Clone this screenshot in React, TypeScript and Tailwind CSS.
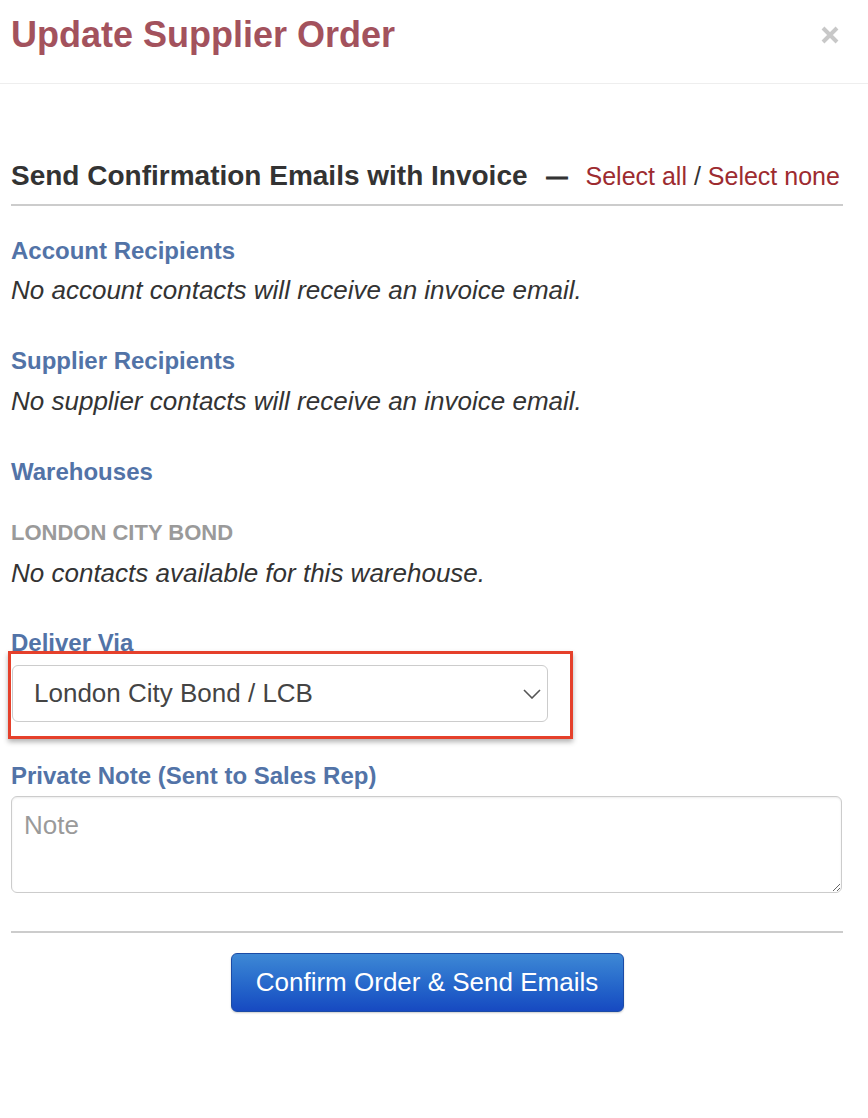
const Label = ({ children, className = "" }: { children: React.ReactNode; className?: string }) => (
  <div className={`text-[24px] leading-[30px] font-bold text-[#5273a7] ${className}`}>{children}</div>
);

const Note = ({ children, className = "" }: { children: React.ReactNode; className?: string }) => (
  <div className={`text-[26px] leading-[36px] italic text-[#333] ${className}`}>{children}</div>
);

export default function App() {
  return (
    <div className="w-[868px] min-h-[1118px] bg-white font-['Liberation_Sans',Arial,sans-serif]">
      {/* Modal header */}
      <div className="h-[84px] border-b border-[#eeeeee] px-[11px] pt-[15px] flex justify-between items-start">
        <h1 className="text-[36px] leading-[40px] font-bold text-[#a3525d]">Update Supplier Order</h1>
        <button className="mt-[10px] mr-[17px] w-[20px] h-[20px] flex items-center justify-center">
          <svg width="18" height="18" viewBox="0 0 18 18">
            <path d="M2 2 L16 16 M16 2 L2 16" stroke="#c8c8c8" strokeWidth="4" strokeLinecap="butt" />
          </svg>
        </button>
      </div>

      <div className="px-[11px]">
        {/* Section header */}
        <div className="mt-[74px] pb-[10px] border-b-2 border-[#cccccc] flex items-center w-[832px] whitespace-nowrap">
          <span className="text-[28px] leading-[36px] font-bold text-[#333]">Send Confirmation Emails with Invoice</span>
          <span className="text-[21px] leading-[36px] font-bold text-[#333] ml-[19px] mr-[18px] [-webkit-text-stroke:1px_#333]">—</span>
          <span className="text-[25px] leading-[36px] text-[#333]">
            <a className="text-[#9d2b30]">Select all</a> / <a className="text-[#9d2b30]">Select none</a>
          </span>
        </div>

        <Label className="mt-[30px]">Account Recipients</Label>
        <Note className="mt-[6px]">No account contacts will receive an invoice email.</Note>

        <Label className="mt-[38px]">Supplier Recipients</Label>
        <Note className="mt-[7px]">No supplier contacts will receive an invoice email.</Note>

        <Label className="mt-[38px]">Warehouses</Label>
        <div className="mt-[32px] text-[22px] leading-[28px] font-bold text-[#9a9a9a]">LONDON CITY BOND</div>
        <Note className="mt-[8px]">No contacts available for this warehouse.</Note>

        <Label className="mt-[37px]">Deliver Via</Label>
        <div className="relative mt-[7px] ml-px w-[536px]">
          {/* highlight annotation */}
          <div className="absolute left-[-4px] top-[-14px] w-[565px] h-[88px] border-[3px] border-[#e5402b] bg-white shadow-[0_3px_5px_rgba(0,0,0,0.3)]" />
          <div className="relative">
            <select className="appearance-none w-full h-[57px] rounded-[6px] border border-[#cccccc] bg-white pl-[21px] text-[26px] text-[#444] outline-none">
              <option>London City Bond / LCB</option>
            </select>
            <svg className="absolute right-[7px] top-[24px] pointer-events-none" width="18" height="10" viewBox="0 0 18 10">
              <polyline points="1,1 9,9 17,1" fill="none" stroke="#555" strokeWidth="1.6" />
            </svg>
          </div>
        </div>

        <Label className="mt-[39px]">Private Note (Sent to Sales Rep)</Label>
        <textarea
          placeholder="Note"
          className="mt-[5px] block w-[831px] h-[97px] rounded-[6px] border border-[#cccccc] shadow-[inset_0_1px_2px_rgba(0,0,0,0.08)] px-[12px] py-[10px] text-[26px] leading-[36px] text-[#333] placeholder:text-[#9a9a9a] outline-none"
        />

        <div className="mt-[38px] border-t-2 border-[#cccccc] w-[832px]" />

        <div className="w-[832px] flex justify-center mt-[20px]">
          <button className="w-[393px] h-[59px] rounded-[6px] border border-[#1b4ba6] bg-gradient-to-b from-[#3e88d5] to-[#1749c1] text-white text-[26px] shadow-[0_1px_2px_rgba(0,0,0,0.2)]">
            Confirm Order &amp; Send Emails
          </button>
        </div>
      </div>
    </div>
  );
}
